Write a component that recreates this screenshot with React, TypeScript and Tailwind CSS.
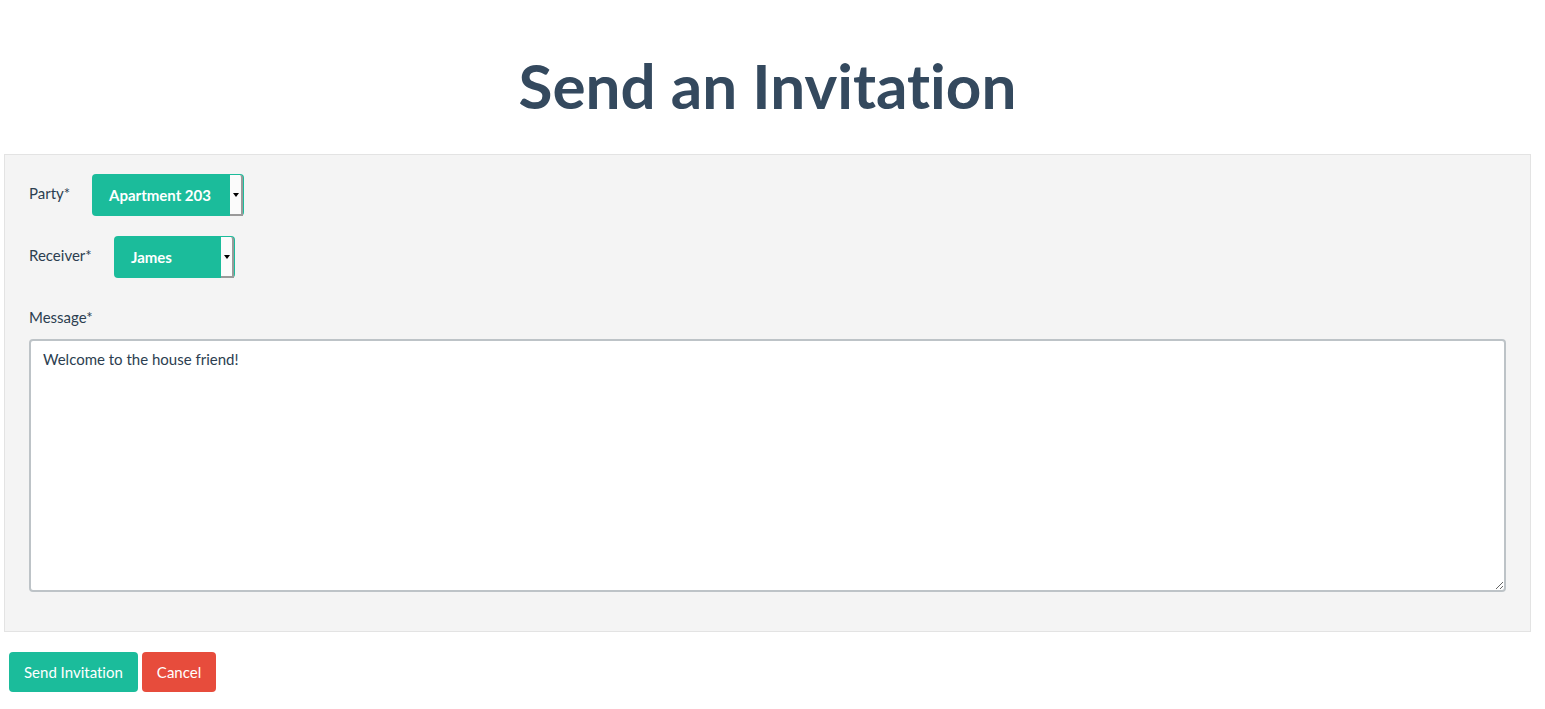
import { useState } from 'react';

interface PickerProps {
  value: string;
  width: string;
}

function Picker({ value, width }: PickerProps) {
  return (
    <div className={`flex h-[42px] ${width} rounded-[4px] bg-[#1bbc9b] pt-[1px] pr-[1px]`}>
      <div className="flex flex-1 items-center pl-[17px] text-[15px] font-bold text-white">{value}</div>
      <div className="flex w-[13px] items-center justify-center rounded-tr-[3px] border-r-2 border-b-2 border-[#9a9a9a] bg-[#fbfbfb]">
        <span className="block h-0 w-0 border-x-[3px] border-t-[4px] border-x-transparent border-t-black" />
      </div>
    </div>
  );
}

export default function App() {
  const [message, setMessage] = useState('Welcome to the house friend!');

  return (
    <div className="min-h-[709px] bg-white font-['Lato','Liberation_Sans',sans-serif] text-[#2c3e50] [font-variant-ligatures:none]">
      <h1 className="pt-[46px] pr-[10px] pb-[29px] text-center text-[62px] leading-[79px] font-bold text-[#34495e]">
        Send an Invitation
      </h1>

      <div className="ml-[4px] mr-[14px] border border-[#e3e3e3] bg-[#f4f4f4] px-[24px] pt-[19px] pb-[39px]">
        {/* party */}
        <div className="flex items-center">
          <label className="mb-[3px] w-[63px] text-[15px]">Party*</label>
          <Picker value="Apartment 203" width="w-[152px]" />
        </div>

        {/* receiver */}
        <div className="mt-[20px] flex items-center">
          <label className="mb-[3px] w-[85px] text-[15px]">Receiver*</label>
          <Picker value="James" width="w-[121px]" />
        </div>

        {/* message */}
        <label className="mt-[29px] block text-[15px] leading-[20px]">Message*</label>
        <textarea
          value={message}
          onChange={e => setMessage(e.target.value)}
          className="mt-[12px] block h-[253px] w-full resize-y rounded-[4px] border-2 border-[#bdc3c7] bg-white px-[12px] py-[8px] text-[15px] leading-[21px] text-[#2c3e50] outline-none"
        />
      </div>

      <div className="mt-[20px] flex gap-[4px] pl-[9px]">
        <button className="h-[40px] rounded-[4px] bg-[#1bbc9b] px-[15px] text-[15px] text-white">Send Invitation</button>
        <button className="h-[40px] rounded-[4px] bg-[#e74c3c] px-[15px] text-[15px] text-white">Cancel</button>
      </div>
    </div>
  );
}
